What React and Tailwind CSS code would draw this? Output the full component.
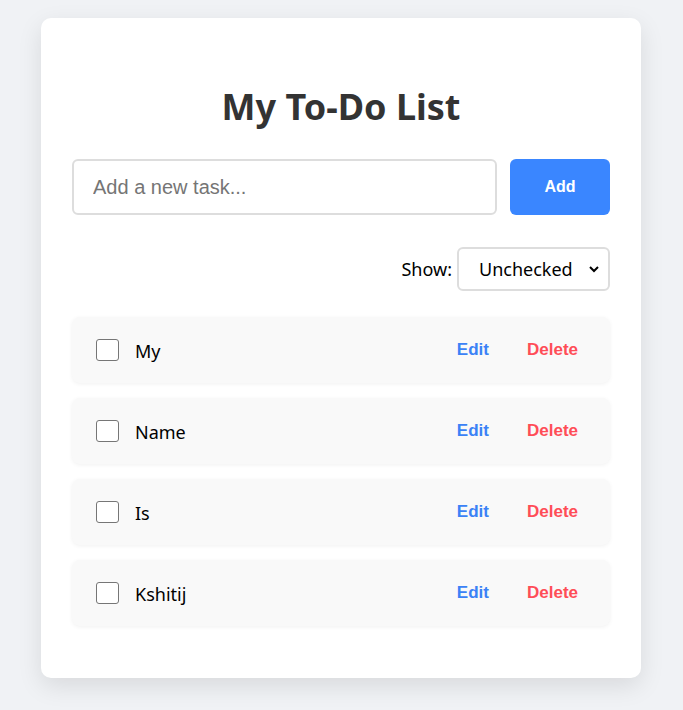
const tasks = ["My", "Name", "Is", "Kshitij"];

function TaskRow({ label }) {
  return (
    <li className="flex h-[66px] items-center rounded-lg bg-[#f9f9f9] pl-6 pr-6 shadow-[0_1px_4px_rgba(0,0,0,0.06)]">
      <span className="h-[22px] w-[23px] shrink-0 rounded-[3px] border-[1.5px] border-[#767676] bg-white" />
      <span className="ml-4 mt-[3px] flex-1 text-[18px] text-black [font-family:'Noto_Sans',sans-serif]">
        {label}
      </span>
      <button className="px-2 text-[17px] font-bold text-[#3b82f6] [font-family:'Liberation_Sans',Arial,sans-serif]">
        Edit
      </button>
      <button className="ml-[22px] px-2 text-[17px] font-bold text-[#ff4d57] [font-family:'Liberation_Sans',Arial,sans-serif]">
        Delete
      </button>
    </li>
  );
}

export default function App() {
  return (
    <div className="min-h-[710px] bg-[#f0f2f5] pt-[18px] [font-family:'Noto_Sans',sans-serif]">
      <div className="ml-[41px] w-[600px] rounded-[10px] bg-white px-[31px] pb-[52px] pt-[69px] shadow-[0_8px_24px_rgba(0,0,0,0.1)]">
        <h1 className="text-center text-[36px] font-bold leading-[40px] text-[#333]">My To-Do List</h1>

        <div className="mt-[32px] flex gap-[13px]">
          <input
            className="h-14 flex-1 rounded-md border-2 border-[#ddd] px-[19px] text-[20px] outline-none placeholder:text-[#757575] [font-family:'Liberation_Sans',Arial,sans-serif]"
            placeholder="Add a new task..."
          />
          <button className="h-14 w-[100px] rounded-md bg-[#3a86ff] text-[16px] font-bold text-white [font-family:'Liberation_Sans',Arial,sans-serif]">
            Add
          </button>
        </div>

        <div className="mt-8 flex items-center justify-end gap-[5px]">
          <span className="text-[18px] text-black">Show:</span>
          <div className="flex h-11 w-[153px] items-center justify-between rounded-md border-2 border-[#ddd] pl-5 pr-2">
            <span className="text-[18px] text-black">Unchecked</span>
            <svg viewBox="0 0 12 12" className="h-3 w-3">
              <path d="M2 4l4 4 4-4" fill="none" stroke="#000" strokeWidth="2" />
            </svg>
          </div>
        </div>

        <ul className="mt-[26px] flex flex-col gap-[15px]">
          {tasks.map((task) => (
            <TaskRow key={task} label={task} />
          ))}
        </ul>
      </div>
    </div>
  );
}
